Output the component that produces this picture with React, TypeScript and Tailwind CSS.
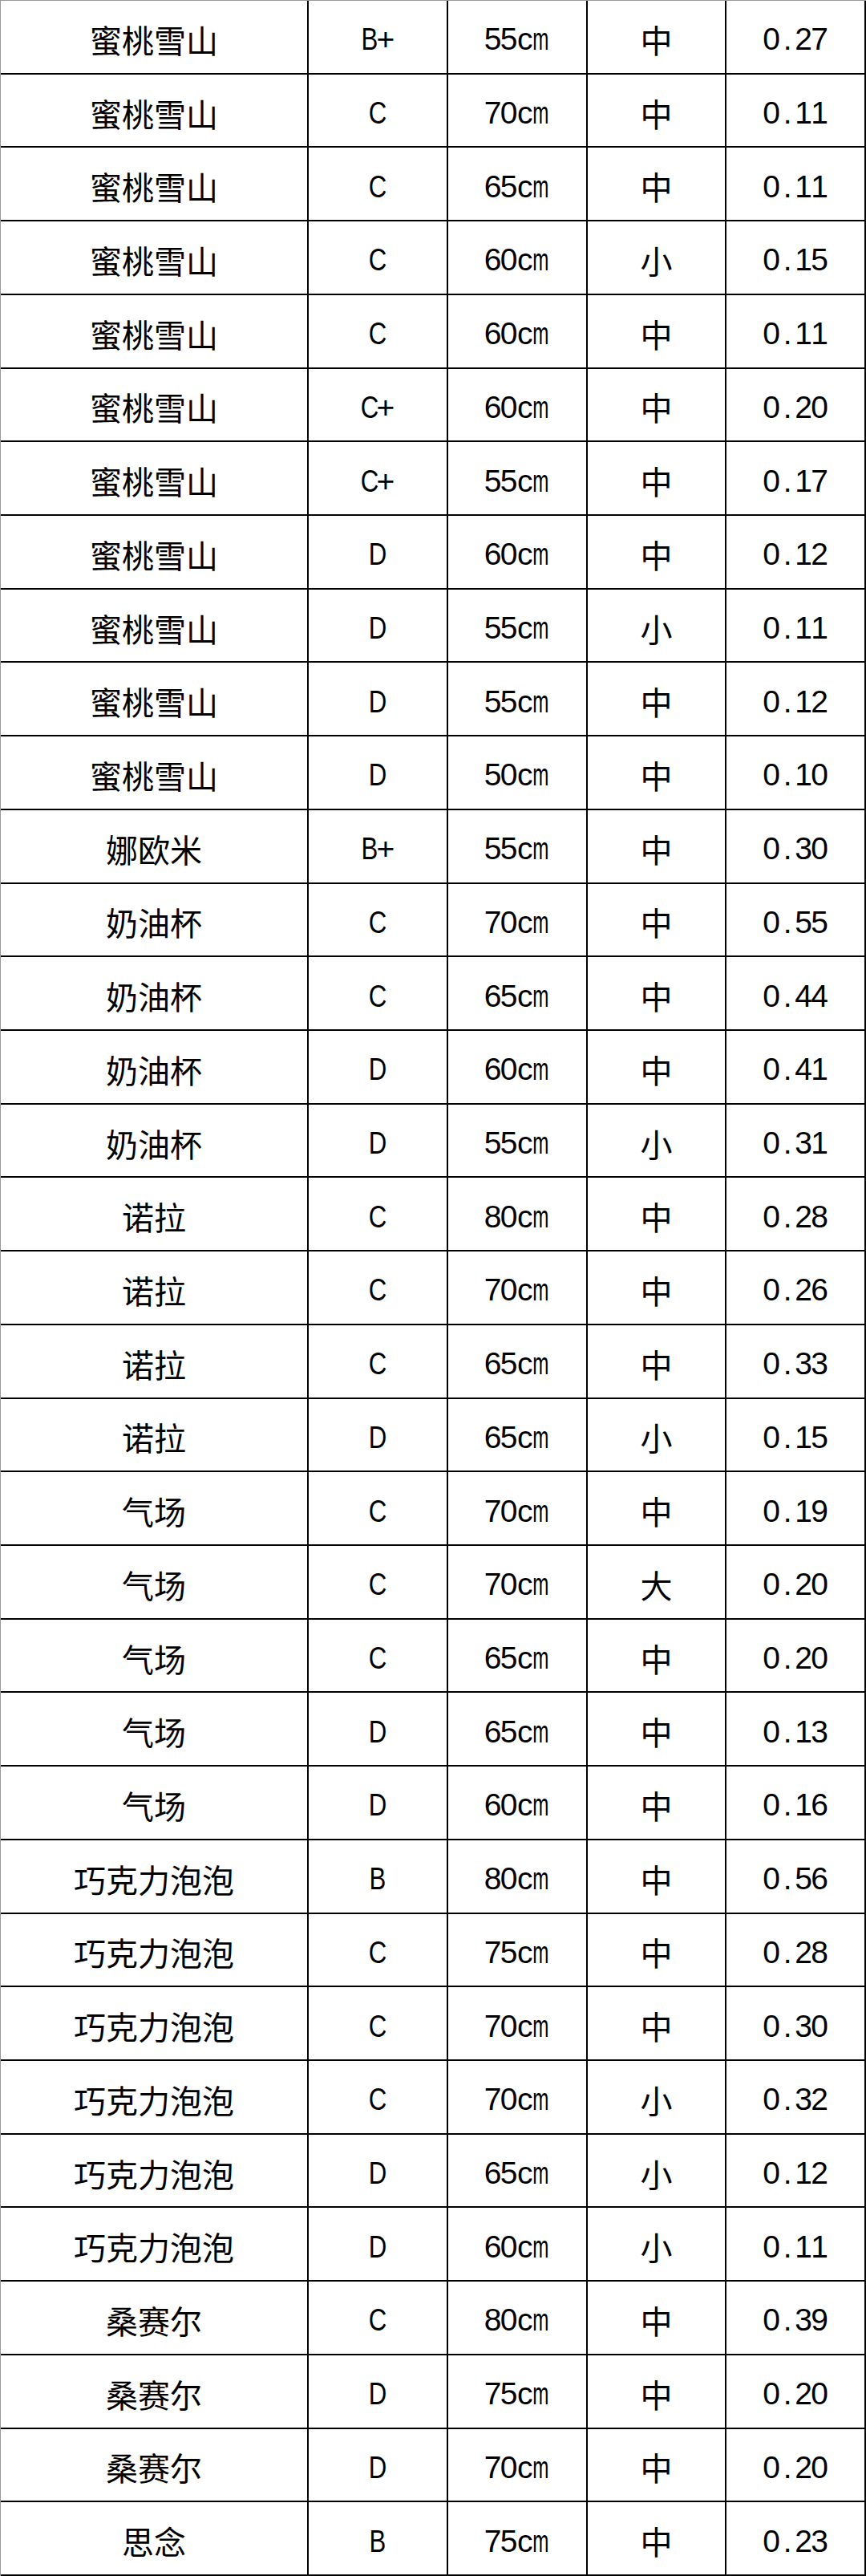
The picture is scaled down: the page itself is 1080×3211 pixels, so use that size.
import React from 'react';

type Row = [string, string, string, string, string];

const rows: Row[] = [
  ['蜜桃雪山', 'B+', '55cm', '中', '0.27'],
  ['蜜桃雪山', 'C', '70cm', '中', '0.11'],
  ['蜜桃雪山', 'C', '65cm', '中', '0.11'],
  ['蜜桃雪山', 'C', '60cm', '小', '0.15'],
  ['蜜桃雪山', 'C', '60cm', '中', '0.11'],
  ['蜜桃雪山', 'C+', '60cm', '中', '0.20'],
  ['蜜桃雪山', 'C+', '55cm', '中', '0.17'],
  ['蜜桃雪山', 'D', '60cm', '中', '0.12'],
  ['蜜桃雪山', 'D', '55cm', '小', '0.11'],
  ['蜜桃雪山', 'D', '55cm', '中', '0.12'],
  ['蜜桃雪山', 'D', '50cm', '中', '0.10'],
  ['娜欧米', 'B+', '55cm', '中', '0.30'],
  ['奶油杯', 'C', '70cm', '中', '0.55'],
  ['奶油杯', 'C', '65cm', '中', '0.44'],
  ['奶油杯', 'D', '60cm', '中', '0.41'],
  ['奶油杯', 'D', '55cm', '小', '0.31'],
  ['诺拉', 'C', '80cm', '中', '0.28'],
  ['诺拉', 'C', '70cm', '中', '0.26'],
  ['诺拉', 'C', '65cm', '中', '0.33'],
  ['诺拉', 'D', '65cm', '小', '0.15'],
  ['气场', 'C', '70cm', '中', '0.19'],
  ['气场', 'C', '70cm', '大', '0.20'],
  ['气场', 'C', '65cm', '中', '0.20'],
  ['气场', 'D', '65cm', '中', '0.13'],
  ['气场', 'D', '60cm', '中', '0.16'],
  ['巧克力泡泡', 'B', '80cm', '中', '0.56'],
  ['巧克力泡泡', 'C', '75cm', '中', '0.28'],
  ['巧克力泡泡', 'C', '70cm', '中', '0.30'],
  ['巧克力泡泡', 'C', '70cm', '小', '0.32'],
  ['巧克力泡泡', 'D', '65cm', '小', '0.12'],
  ['巧克力泡泡', 'D', '60cm', '小', '0.11'],
  ['桑赛尔', 'C', '80cm', '中', '0.39'],
  ['桑赛尔', 'D', '75cm', '中', '0.20'],
  ['桑赛尔', 'D', '70cm', '中', '0.20'],
  ['思念', 'B', '75cm', '中', '0.23'],
];

// half-width latin, like the 黑体 in the sheet: every char gets a 20px slot
const Half: React.FC<{ text: string }> = ({ text }) => (
  <span className="inline-flex font-['Liberation_Sans',sans-serif] text-[39px] leading-none">
    {text.split('').map((ch, i) => (
      <span key={i} className="inline-flex w-[20px] justify-center">
        {ch === 'm' ? (
          <span className="inline-block scale-x-[0.62]">m</span>
        ) : ch === 'B' || ch === 'C' || ch === 'D' ? (
          <span className="inline-block scale-x-[0.8]">{ch}</span>
        ) : (
          ch
        )}
      </span>
    ))}
  </span>
);

const Cell: React.FC<{ children: React.ReactNode }> = ({ children }) => (
  <div className="flex items-center justify-center border-r-2 border-b-2 border-black pt-[6px]">
    {children}
  </div>
);

export default function App() {
  return (
    <div className="w-[1080px] bg-white text-black">
      <div className="grid h-[3211px] grid-cols-[384px_repeat(4,1fr)] grid-rows-[repeat(35,1fr)] border-t border-l border-[#9a9a9a]">
        {rows.map((r, i) => (
          <React.Fragment key={i}>
            <Cell>
              <span className="font-['Noto_Sans_CJK_SC',sans-serif] text-[40px] leading-none">{r[0]}</span>
            </Cell>
            <Cell>
              <Half text={r[1]} />
            </Cell>
            <Cell>
              <Half text={r[2]} />
            </Cell>
            <Cell>
              <span className="font-['Noto_Sans_CJK_SC',sans-serif] text-[40px] leading-none">{r[3]}</span>
            </Cell>
            <Cell>
              <Half text={r[4]} />
            </Cell>
          </React.Fragment>
        ))}
      </div>
    </div>
  );
}
